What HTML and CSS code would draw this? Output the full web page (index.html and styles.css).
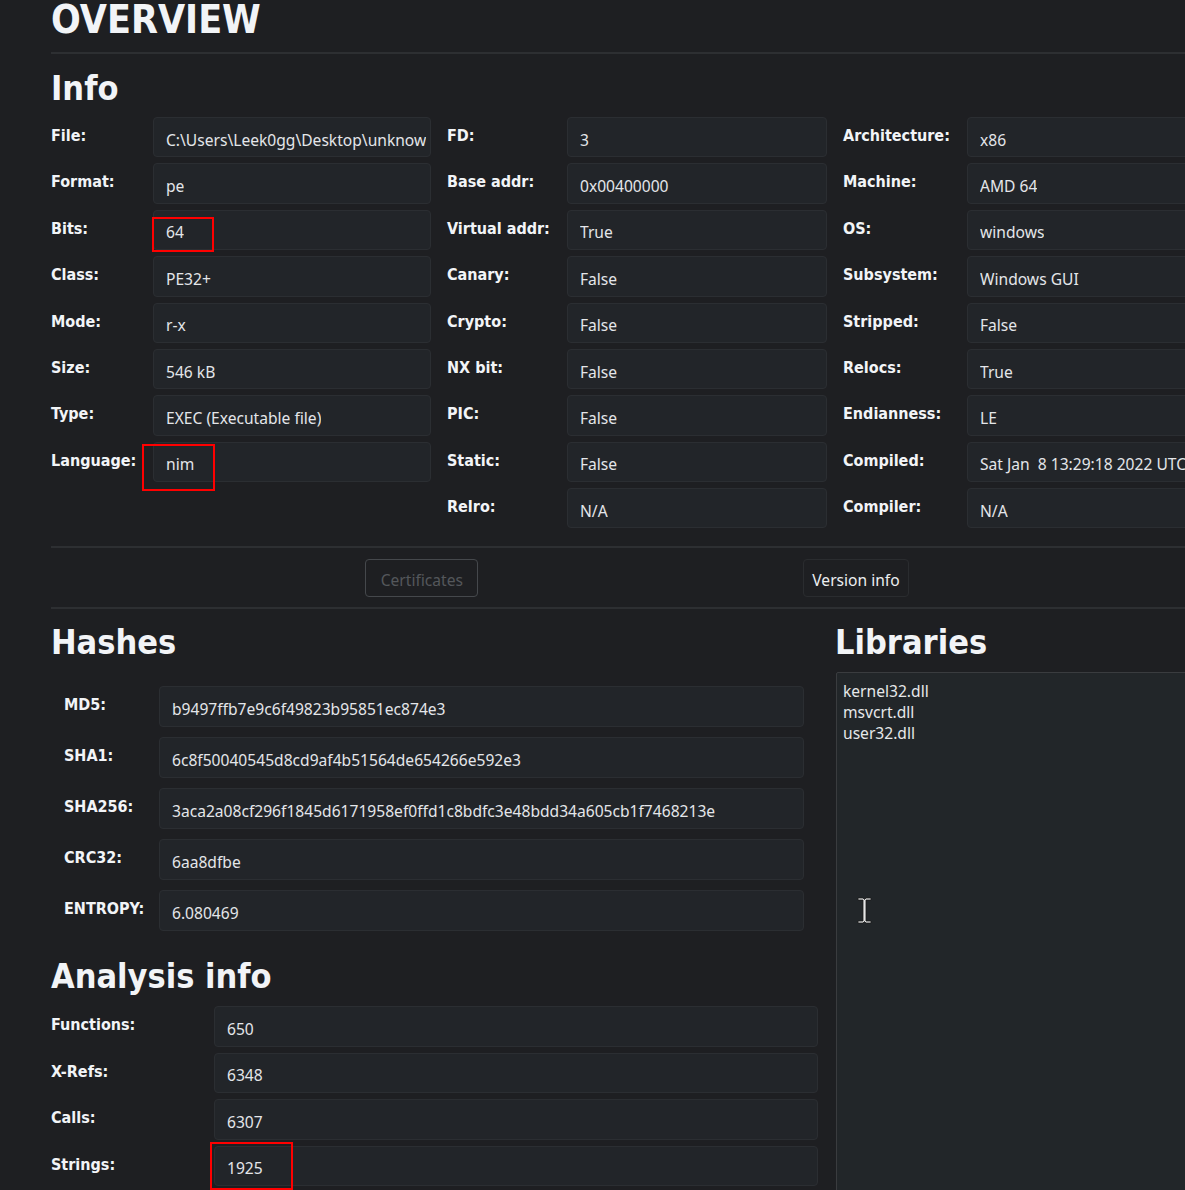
FILE: index.html
```html
<!DOCTYPE html>
<html lang="en">
<head>
<meta charset="utf-8">
<title>Overview</title>
<link rel="stylesheet" href="styles.css">
</head>
<body>
<div class="page">
  <h1 class="title">OVERVIEW</h1>
  <hr class="rule rule-top">
  <h2 class="section section-info">Info</h2>

  <div class="info-grid">
    <div class="kv kv-a">
      <div class="k">File:</div><div class="v v-tight"><span class="t">C:\Users\Leek0gg\Desktop\unknow</span></div>
      <div class="k">Format:</div><div class="v"><span class="t">pe</span></div>
      <div class="k">Bits:</div><div class="v"><span class="t">64</span><span class="mark mark-bits"></span></div>
      <div class="k">Class:</div><div class="v"><span class="t">PE32+</span></div>
      <div class="k">Mode:</div><div class="v"><span class="t">r-x</span></div>
      <div class="k">Size:</div><div class="v"><span class="t">546 kB</span></div>
      <div class="k">Type:</div><div class="v"><span class="t">EXEC (Executable file)</span></div>
      <div class="k">Language:</div><div class="v"><span class="t">nim</span><span class="mark mark-lang"></span></div>
    </div>
    <div class="kv kv-b">
      <div class="k">FD:</div><div class="v"><span class="t">3</span></div>
      <div class="k">Base addr:</div><div class="v"><span class="t">0x00400000</span></div>
      <div class="k">Virtual addr:</div><div class="v"><span class="t">True</span></div>
      <div class="k">Canary:</div><div class="v"><span class="t">False</span></div>
      <div class="k">Crypto:</div><div class="v"><span class="t">False</span></div>
      <div class="k">NX bit:</div><div class="v"><span class="t">False</span></div>
      <div class="k">PIC:</div><div class="v"><span class="t">False</span></div>
      <div class="k">Static:</div><div class="v"><span class="t">False</span></div>
      <div class="k">Relro:</div><div class="v"><span class="t">N/A</span></div>
    </div>
    <div class="kv kv-c">
      <div class="k">Architecture:</div><div class="v"><span class="t">x86</span></div>
      <div class="k">Machine:</div><div class="v"><span class="t">AMD 64</span></div>
      <div class="k">OS:</div><div class="v"><span class="t">windows</span></div>
      <div class="k">Subsystem:</div><div class="v"><span class="t">Windows GUI</span></div>
      <div class="k">Stripped:</div><div class="v"><span class="t">False</span></div>
      <div class="k">Relocs:</div><div class="v"><span class="t">True</span></div>
      <div class="k">Endianness:</div><div class="v"><span class="t">LE</span></div>
      <div class="k">Compiled:</div><div class="v"><span class="t">Sat Jan  8 13:29:18 2022 UTC</span></div>
      <div class="k">Compiler:</div><div class="v"><span class="t">N/A</span></div>
    </div>
  </div>

  <hr class="rule rule-mid">
  <div class="btn-row">
    <button class="btn btn-disabled" disabled>Certificates</button>
    <button class="btn">Version info</button>
  </div>
  <hr class="rule rule-low">

  <div class="lower">
    <div class="left">
      <h2 class="section">Hashes</h2>
      <div class="hashes">
        <div class="k">MD5:</div><div class="v"><span class="t">b9497ffb7e9c6f49823b95851ec874e3</span></div>
        <div class="k">SHA1:</div><div class="v"><span class="t">6c8f50040545d8cd9af4b51564de654266e592e3</span></div>
        <div class="k">SHA256:</div><div class="v"><span class="t">3aca2a08cf296f1845d6171958ef0ffd1c8bdfc3e48bdd34a605cb1f7468213e</span></div>
        <div class="k">CRC32:</div><div class="v"><span class="t">6aa8dfbe</span></div>
        <div class="k">ENTROPY:</div><div class="v"><span class="t">6.080469</span></div>
      </div>

      <h2 class="section section-analysis">Analysis info</h2>
      <div class="analysis">
        <div class="k">Functions:</div><div class="v"><span class="t">650</span></div>
        <div class="k">X-Refs:</div><div class="v"><span class="t">6348</span></div>
        <div class="k">Calls:</div><div class="v"><span class="t">6307</span></div>
        <div class="k">Strings:</div><div class="v"><span class="t">1925</span><span class="mark mark-str"></span></div>
      </div>
    </div>
    <div class="right">
      <h2 class="section section-libs">Libraries</h2>
      <div class="libs">
        <div class="lib">kernel32.dll</div>
        <div class="lib">msvcrt.dll</div>
        <div class="lib">user32.dll</div>
        <svg class="cursor" width="15" height="27" viewBox="0 0 15 27" aria-hidden="true">
          <path d="M1 1 H6 L7.5 2.5 L9 1 H14 V3 H9 V24 H14 V26 H9 L7.5 24.5 L6 26 H1 V24 H6 V3 H1 Z" fill="#e6e6e6" stroke="#1a1a1a" stroke-width="0.8"/>
        </svg>
      </div>
    </div>
  </div>
</div>
</body>
</html>
```

FILE: styles.css
```css
html, body {
  margin: 0;
  padding: 0;
  overflow: hidden;
  background: #1e1f22;
}

body {
  color: #e6e8ea;
  font-family: "Noto Sans", "Open Sans", sans-serif;
  font-size: 15.6px;
}

.page {
  width: 1172px;
  margin-left: 51px;
}

.title,
.section,
.k {
  font-family: "DejaVu Sans Condensed", "DejaVu Sans", sans-serif;
  font-stretch: condensed;
  font-weight: bold;
  color: #f2f4f7;
}

.title {
  margin: 0;
  font-size: 39px;
  line-height: 40px;
}

.section {
  margin: 0;
  font-size: 34px;
  line-height: 36px;
}

.rule {
  border: 0;
  height: 2px;
  background: #2d2f32;
  margin: 0;
}

.rule-top { margin-top: 12px; }
.section-info { margin-top: 16px; }

.info-grid {
  margin-top: 11px;
  display: grid;
  grid-template-columns: 380px 380px 380px;
  column-gap: 16px;
}

.kv,
.hashes,
.analysis {
  display: grid;
  grid-auto-rows: 40.375px;
  row-gap: 6px;
  align-content: start;
}

.kv-a { grid-template-columns: 102px 1fr; }
.kv-b { grid-template-columns: 120px 1fr; }
.kv-c { grid-template-columns: 124px 1fr; }

.k {
  font-size: 16px;
  line-height: 24px;
  padding-top: 7px;
  white-space: nowrap;
}

.v {
  position: relative;
  display: flex;
  align-items: center;
  box-sizing: border-box;
  padding: 5px 8px 0 12px;
  background: #222529;
  border: 1px solid #2b2e32;
  border-radius: 4px;
  min-width: 0;
}

.v-tight { padding-right: 4px; }

.t {
  display: block;
  overflow: hidden;
  white-space: pre;
  color: #e4e6e9;
}

.mark {
  position: absolute;
  border: 2px solid #ff0000;
  box-sizing: border-box;
}

.mark-bits { left: -2px; top: 6px; width: 62px; height: 35px; }
.mark-lang { left: -12px; top: 1px; width: 73px; height: 47px; }
.mark-str { left: -5px; top: -5px; width: 83px; height: 48px; }

.rule-mid { margin-top: 18px; }

.btn-row {
  display: flex;
  justify-content: center;
  gap: 325px;
  margin-top: 11px;
  margin-bottom: 10px;
}

.btn {
  height: 38px;
  box-sizing: border-box;
  padding: 3px 8px 0;
  font-family: "Noto Sans", "Open Sans", sans-serif;
  font-size: 15.6px;
  color: #eceef0;
  background: transparent;
  border: 1px solid #2a2c2f;
  border-radius: 4px;
}

.btn-disabled {
  width: 113px;
  color: #54575b;
  border-color: #45484c;
}

.lower {
  display: grid;
  grid-template-columns: 769px 1fr;
  column-gap: 16px;
  margin-top: 15px;
}

.section-libs { margin-left: -1px; }

.hashes {
  margin-top: 26px;
  padding: 0 16px 0 13px;
  grid-template-columns: 95px 1fr;
  grid-auto-rows: 41px;
  row-gap: 10px;
}

.section-analysis { margin-top: 27px; }

.analysis {
  margin-top: 12px;
  padding-right: 2px;
  grid-template-columns: 163px 1fr;
}

.libs {
  position: relative;
  margin-top: 12px;
  height: 560px;
  box-sizing: border-box;
  padding: 8px 6px;
  background: #222629;
  border: 1px solid #3a3c3f;
  border-radius: 2px 0 0 0;
  font-size: 15.6px;
  line-height: 21px;
  color: #e6e8ea;
}

.cursor {
  position: absolute;
  left: 20px;
  top: 224px;
}
```
